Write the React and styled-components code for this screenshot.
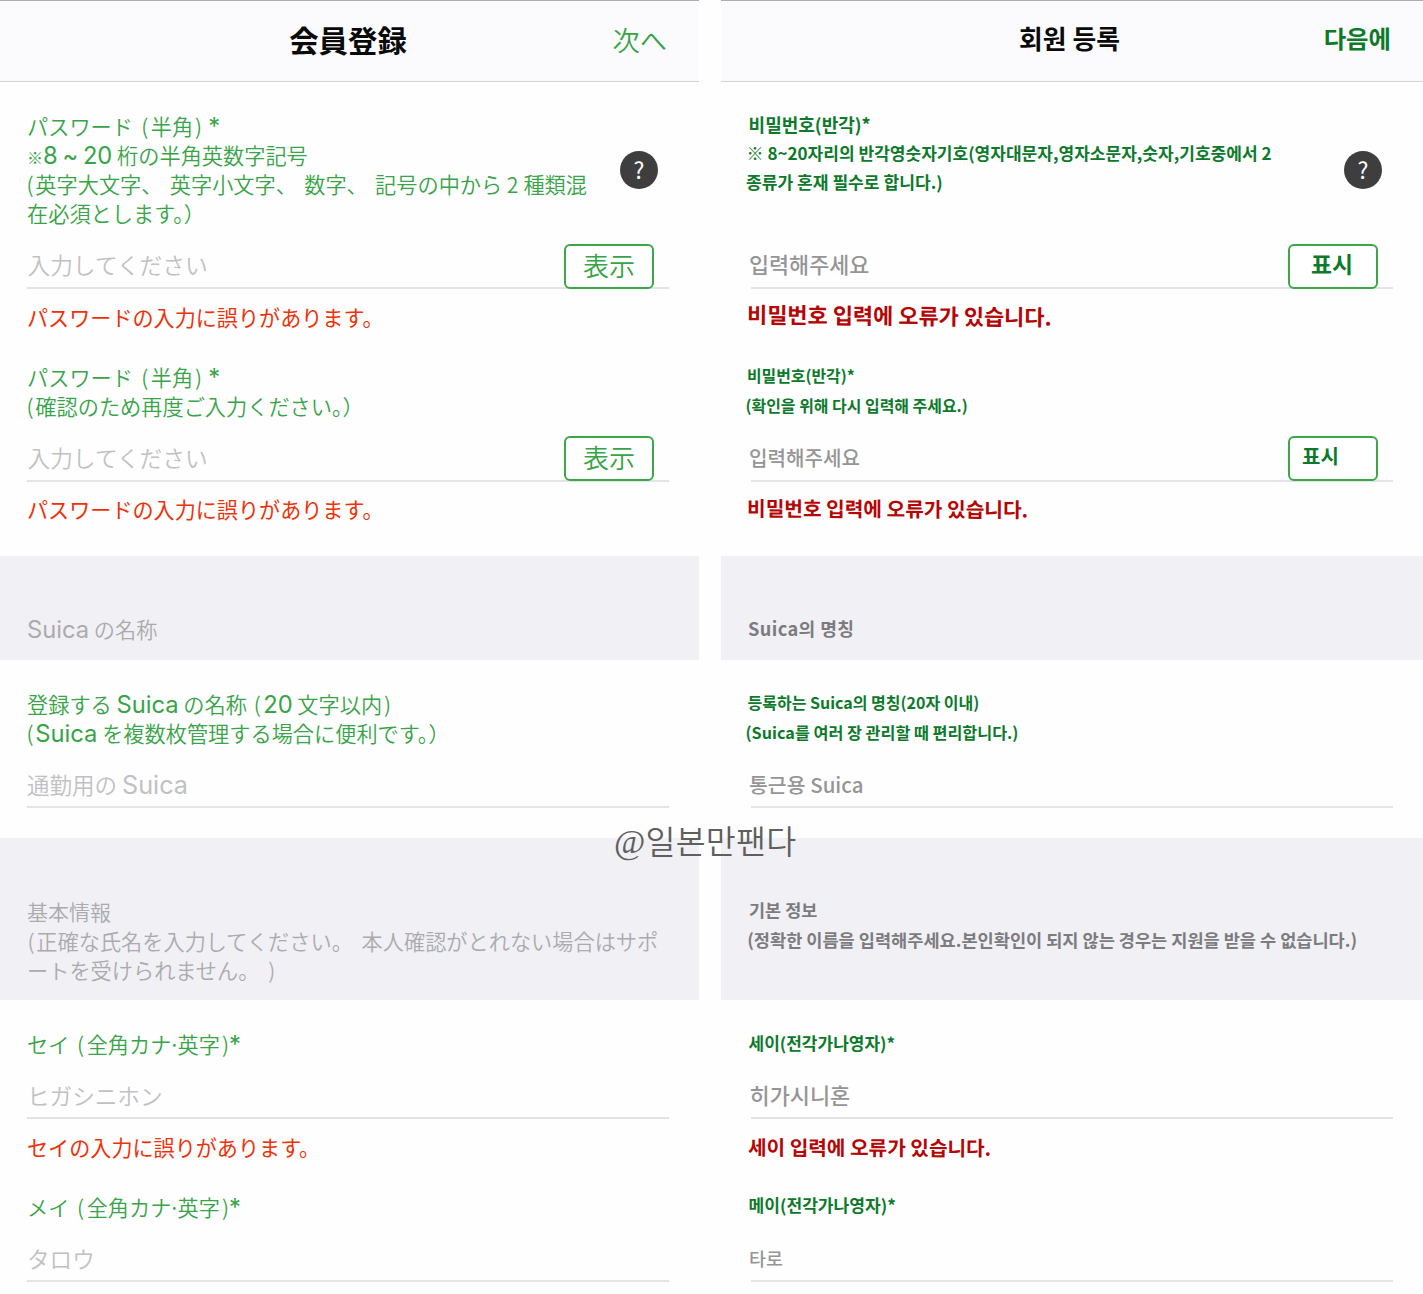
import React from 'react';
import styled, {createGlobalStyle} from 'styled-components';

const GlobalStyle = createGlobalStyle`
  body {
    margin: 0;
    background: #fff;
    overflow: hidden;
  }
`;

const Page = styled.div`
  position: relative;
  display: flex;
  justify-content: space-between;
  width: 1423px;
  height: 1294px;
  overflow: hidden;
  background: #fefefe;
`;

const Screen = styled.div`
  width: ${p => p.$korean ? 702 : 699}px;
  font-family: ${p => p.$korean ? '"Noto Sans CJK KR"' : '"Noto Sans CJK JP"'}, sans-serif;
  font-size: 21.2px;
  font-weight: ${p => p.$korean ? 700 : 350};
  --accent: ${p => p.$korean ? '#0d7a2b' : '#37a447'};
  --error: ${p => p.$korean ? '#b50505' : '#ee3109'};
  --placeholder: ${p => p.$korean ? '#959595' : '#c1c1c3'};
  --caption: ${p => p.$korean ? '#7c7c7f' : '#ababae'};
  --indent: ${p => p.$korean ? 30 : 27}px;
`;

const Header = styled.div`
  display: grid;
  grid-template-columns: 1fr auto 1fr;
  align-items: center;
  box-sizing: border-box;
  height: 82px;
  padding: 0 32px 4px;
  border-top: 1px solid #adadb0;
  border-bottom: 1px solid #d2d2d4;
  background: #fbfbfd;
`;

const Block = styled.div`
  box-sizing: border-box;
  height: ${p => p.$h}px;
  padding: ${p => p.$pt || 29}px 30px 0 var(--indent);
`;

const Band = styled(Block)`
  background: #f1f0f5;
`;

const Line = styled.div`
  width: fit-content;
  line-height: 29px;
  white-space: nowrap;
  color: var(--accent);
  ${p => p.$size && `font-size: ${p.$size}px;`}
  ${p => p.$weight && `font-weight: ${p.$weight};`}
  letter-spacing: ${p => p.$ls || 0}px;
  word-spacing: ${p => p.$ws || 0}px;
  margin: ${p => p.$dy || 0}px 0 ${p => -(p.$dy || 0)}px ${p => p.$dx || 0}px;
  ${p => p.$tilt && `transform: rotate(${p.$tilt}deg); transform-origin: left center;`}
`;

const Caption = styled(Line)`
  color: var(--caption);
`;

const Title = styled(Line)`
  grid-column: 2;
  color: #0a0a0a;
  font-weight: 700;
`;

const Action = styled(Line)`
  justify-self: end;
`;

const LabelRow = styled.div`
  display: flex;
  justify-content: space-between;
`;

const Help = styled.div`
  flex: none;
  width: 38px;
  height: 38px;
  margin: 40px 11px 0 0;
  border-radius: 50%;
  background: #3e3e3e;
  color: #fff;
  font: 400 23px/36px "Noto Sans CJK JP", sans-serif;
  text-align: center;
`;

const Field = styled.div`
  display: flex;
  justify-content: space-between;
  align-items: flex-end;
  box-sizing: border-box;
  height: ${p => p.$h || 62}px;
  border-bottom: 2px solid #e4e4e5;
`;

const Placeholder = styled(Line)`
  padding-bottom: ${p => p.$pb || 7}px;
  color: var(--placeholder);
`;

const ShowButton = styled.div`
  display: flex;
  justify-content: ${p => p.$start ? 'flex-start' : 'center'};
  align-items: center;
  box-sizing: border-box;
  width: 90px;
  height: 45px;
  margin: 0 15px -1.5px 0;
  padding: 0 ${p => p.$start ? 12 : 0}px 4px;
  border: 2px solid #3ca64b;
  border-radius: 6px;
  background: #fff;
`;

const ErrorLine = styled(Line)`
  padding: 13.5px 0 30px;
  color: var(--error);
`;

const Latin = styled.span`
  font-family: Inter, sans-serif;
  font-size: 1.12em;
  font-weight: ${p => p.theme.latinWeight || 400};
  line-height: 0;
`;

const Paren = styled.span`
  margin: ${p => p.$m};
`;

const Digit = styled.span`
  margin: 0 5px 0 4.5px;
`;

const Mark = styled.span`
  font-size: 16px;
  font-weight: 700;
  line-height: 0;
`;

const Dot = styled.span`
  margin: 0 -2.8px;
`;

const Watermark = styled.div`
  position: absolute;
  left: 614px;
  top: 817px;
  display: flex;
  color: #5f5f60;
  font: 350 32.6px/46px "Noto Sans CJK KR", sans-serif;
  letter-spacing: 0.2px;
  span {
    font-family: "Liberation Serif", serif;
    font-size: 34px;
    padding-top: 2px;
  }
`;

// Latin runs, brackets and marks inside Japanese lines get their own spacing
const mix = text => text.split(/([A-Za-z0-9~*]+|[()※·])/).map((part, i, all) => {
  if (i % 2 === 0) return part;
  if (part === '(') return <Paren key={i} $m={i === 1 && !all[0] ? '0 1.8px 0 -0.5px' : '0 2.5px 0 2px'}>(</Paren>;
  if (part === ')') return <Paren key={i} $m="0 0 0 2px">)</Paren>;
  if (part === '※') return <Mark key={i}>※</Mark>;
  if (part === '·') return <Dot key={i}>·</Dot>;
  return <Latin key={i}>{part}</Latin>;
});

const JapaneseScreen = () => (
  <Screen>
    <Header>
      <Title $size={29.4} $dx={-3}>会員登録</Title>
      <Action $size={27.2}>次へ</Action>
    </Header>
    <Block $h={474}>
      <LabelRow>
        <div>
          <Line $ws={1.5}>{mix('パスワード (半角) *')}</Line>
          <Line>{mix('※8 ~ 20 桁の半角英数字記号')}</Line>
          <Line $ws={2.6}>{mix('(英字大文字、 英字小文字、 数字、 記号の中から')}<Digit>2</Digit>種類混</Line>
          <Line>在必須とします。）</Line>
        </div>
        <Help>?</Help>
      </LabelRow>
      <Field>
        <Placeholder $size={22.7} $dx={0.5} $pb={8}>入力してください</Placeholder>
        <ShowButton><Line $size={26}>表示</Line></ShowButton>
      </Field>
      <ErrorLine $size={21.1} $weight={400}>パスワードの入力に誤りがあります。</ErrorLine>
      <Line $ws={1.5}>{mix('パスワード (半角) *')}</Line>
      <Line>{mix('(確認のため再度ご入力ください。）')}</Line>
      <Field>
        <Placeholder $size={22.7} $dx={0.5} $pb={8}>入力してください</Placeholder>
        <ShowButton><Line $size={26}>表示</Line></ShowButton>
      </Field>
      <ErrorLine $size={21.1} $weight={400}>パスワードの入力に誤りがあります。</ErrorLine>
    </Block>
    <Band $h={104} $pt={58}>
      <Caption>{mix('Suica の名称')}</Caption>
    </Band>
    <Block $h={178}>
      <Line>{mix('登録する Suica の名称 (20 文字以内)')}</Line>
      <Line>{mix('(Suica を複数枚管理する場合に便利です。）')}</Line>
      <Field $h={61}>
        <Placeholder $size={22.5}>{mix('通勤用の Suica')}</Placeholder>
      </Field>
    </Block>
    <Band $h={162} $pt={58.5}>
      <Caption $size={21}>基本情報</Caption>
      <Caption $ws={4} $dx={1}>{mix('(正確な氏名を入力してください。 本人確認がとれない場合はサポ')}</Caption>
      <Caption $ws={4}>ートを受けられません。 )</Caption>
    </Band>
    <Block $h={294}>
      <Line $ws={1}>{mix('セイ (全角カナ·英字)*')}</Line>
      <Field $h={61}>
        <Placeholder $size={22.6}>ヒガシニホン</Placeholder>
      </Field>
      <ErrorLine $size={21.1} $weight={400}>セイの入力に誤りがあります。</ErrorLine>
      <Line $ws={1}>{mix('メイ (全角カナ·英字)*')}</Line>
      <Field $h={61}>
        <Placeholder $size={22.6}>タロウ</Placeholder>
      </Field>
    </Block>
  </Screen>
);

const KoreanScreen = () => (
  <Screen $korean>
    <Header>
      <Title $size={25.8} $dx={-5} $dy={-2}>회원 등록</Title>
      <Action $size={24.4} $dy={-2}>다음에</Action>
    </Header>
    <Block $h={474}>
      <LabelRow>
        <div>
          <Line $size={18} $dx={-2.4} $dy={-1}>비밀번호(반각)*</Line>
          <Line $size={17.05} $dx={-4.5} $dy={-2.5}>※ 8~20자리의 반각영숫자기호(영자대문자,영자소문자,숫자,기호중에서 2</Line>
          <Line $size={17.1} $dx={-5} $dy={-2}>종류가 혼재 필수로 합니다.)</Line>
          <Line>&nbsp;</Line>
        </div>
        <Help>?</Help>
      </LabelRow>
      <Field>
        <Placeholder $size={21.8} $weight={500} $dx={-2} $pb={9}>입력해주세요</Placeholder>
        <ShowButton><Line $size={22.8} $dx={-2} $dy={-1}>표시</Line></ShowButton>
      </Field>
      <ErrorLine $size={21.95} $dx={-4.2} $dy={-4} $tilt={0.5}>비밀번호 입력에 오류가 있습니다.</ErrorLine>
      <Line $size={15.9} $dx={-4} $dy={-1}>비밀번호(반각)*</Line>
      <Line $size={15.95} $dx={-5.5}>(확인을 위해 다시 입력해 주세요.)</Line>
      <Field>
        <Placeholder $size={20.1} $weight={500} $dx={-2} $pb={8}>입력해주세요</Placeholder>
        <ShowButton $start><Line $size={20} $dy={-1}>표시</Line></ShowButton>
      </Field>
      <ErrorLine $size={20.25} $dx={-4.2} $dy={-2.5} $tilt={0.3}>비밀번호 입력에 오류가 있습니다.</ErrorLine>
    </Block>
    <Band $h={104} $pt={58}>
      <Caption $size={18.2} $ls={0.4} $dx={-3}>Suica의 명칭</Caption>
    </Band>
    <Block $h={178}>
      <Line $size={16} $dx={-3.5} $dy={-1}>등록하는 Suica의 명칭(20자 이내)</Line>
      <Line $size={16.22} $dx={-5.5} $dy={-0.5}>(Suica를 여러 장 관리할 때 편리합니다.)</Line>
      <Field $h={61}>
        <Placeholder $size={20.5} $weight={500} $dx={-2}>통근용 Suica</Placeholder>
      </Field>
    </Block>
    <Band $h={162} $pt={58}>
      <Caption $size={17.5} $dx={-2} $dy={-1.5}>기본 정보</Caption>
      <Caption $size={17.57} $dx={-3.8} $dy={-0.5}>(정확한 이름을 입력해주세요.본인확인이 되지 않는 경우는 지원을 받을 수 없습니다.)</Caption>
    </Band>
    <Block $h={294}>
      <Line $size={17} $dx={-2.5} $dy={-1}>세이(전각가나영자)*</Line>
      <Field $h={61}>
        <Placeholder $size={21.9} $weight={500} $dx={-1.5} $pb={8}>히가시니혼</Placeholder>
      </Field>
      <ErrorLine $size={20.2} $dx={-3} $dy={-1.5} $tilt={0.2}>세이 입력에 오류가 있습니다.</ErrorLine>
      <Line $size={17.1} $dx={-2.5} $dy={-1.5}>메이(전각가나영자)*</Line>
      <Field $h={61}>
        <Placeholder $size={18.4} $weight={500} $dx={-2}>타로</Placeholder>
      </Field>
    </Block>
  </Screen>
);

const App = () => (
  <Page>
    <GlobalStyle/>
    <JapaneseScreen/>
    <KoreanScreen/>
    <Watermark><span>@</span>일본만팬다</Watermark>
  </Page>
);

export default App;
